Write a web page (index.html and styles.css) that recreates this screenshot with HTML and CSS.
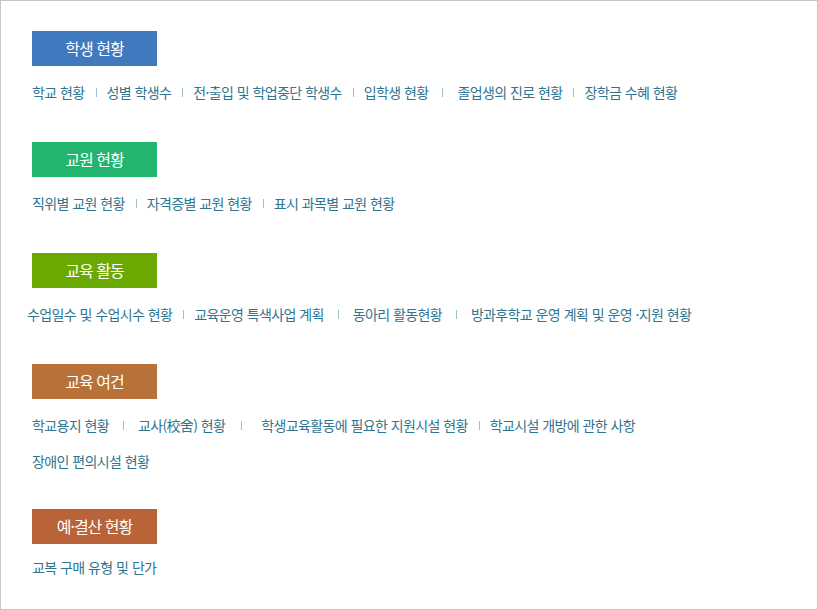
FILE: index.html
```html
<!DOCTYPE html>
<html lang="ko">
<head>
<meta charset="utf-8">
<title>학교 정보</title>
<link rel="stylesheet" href="styles.css">
</head>
<body>
<div class="frame">
  <section class="group">
    <h2 class="tag tag-blue">학생 현황</h2>
    <ul class="links">
      <li>학교 현황</li><li class="sep"></li>
      <li>성별 학생수</li><li class="sep"></li>
      <li>전·출입 및 학업중단 학생수</li><li class="sep"></li>
      <li>입학생 현황</li><li class="sep wide"></li>
      <li>졸업생의 진로 현황</li><li class="sep"></li>
      <li>장학금 수혜 현황</li>
    </ul>
  </section>
  <section class="group">
    <h2 class="tag tag-green">교원 현황</h2>
    <ul class="links">
      <li>직위별 교원 현황</li><li class="sep"></li>
      <li>자격증별 교원 현황</li><li class="sep"></li>
      <li>표시 과목별 교원 현황</li>
    </ul>
  </section>
  <section class="group">
    <h2 class="tag tag-olive">교육 활동</h2>
    <ul class="links shift">
      <li>수업일수 및 수업시수 현황</li><li class="sep"></li>
      <li>교육운영 특색사업 계획</li><li class="sep wide"></li>
      <li>동아리 활동현황</li><li class="sep wide"></li>
      <li>방과후학교 운영 계획 및 운영 ·지원 현황</li>
    </ul>
  </section>
  <section class="group group-tight">
    <h2 class="tag tag-brown">교육 여건</h2>
    <ul class="links">
      <li>학교용지 현황</li><li class="sep wide"></li>
      <li>교사(校舍) 현황</li><li class="sep wider"></li>
      <li>학생교육활동에 필요한 지원시설 현황</li><li class="sep"></li>
      <li>학교시설 개방에 관한 사항</li>
    </ul>
    <ul class="links">
      <li>장애인 편의시설 현황</li>
    </ul>
  </section>
  <section class="group">
    <h2 class="tag tag-rust tag-close">예·결산 현황</h2>
    <ul class="links">
      <li>교복 구매 유형 및 단가</li>
    </ul>
  </section>
</div>
</body>
</html>
```
FILE: styles.css
```css
html, body {
  margin: 0;
  padding: 0;
  background: #ffffff;
}

.frame {
  box-sizing: border-box;
  width: 818px;
  height: 610px;
  border: 1px solid #c6c6c6;
  padding: 30px 31px 0;
  font-family: "Noto Sans CJK KR", "Noto Sans", sans-serif;
}

.group {
  margin-bottom: 32px;
}

.group-tight {
  margin-bottom: 30px;
}

.tag {
  box-sizing: border-box;
  width: 125px;
  height: 35px;
  margin: 0 0 8px;
  color: #ffffff;
  font-size: 16px;
  font-weight: 400;
  letter-spacing: -1px;
  line-height: 35px;
  text-align: center;
}

.tag.tag-close {
  margin-bottom: 5px;
}

.tag-blue { background: #4079be; }
.tag-green { background: #23b56f; }
.tag-olive { background: #6aa900; }
.tag-brown { background: #b87139; }
.tag-rust { background: #b86338; }

.links {
  display: flex;
  align-items: center;
  margin: 0;
  padding: 0;
  list-style: none;
  height: 36px;
  font-size: 14px;
  letter-spacing: -0.65px;
  word-spacing: 0.3px;
  color: #2f7590;
  white-space: nowrap;
}

.links.shift {
  margin-left: -5px;
}

.sep {
  width: 1px;
  height: 9px;
  margin: 0 10px 0 11px;
  background: #9fbfcc;
}

.sep.wide {
  margin: 0 14px;
}

.sep.wider {
  margin: 0 19px 0 16px;
}
```
